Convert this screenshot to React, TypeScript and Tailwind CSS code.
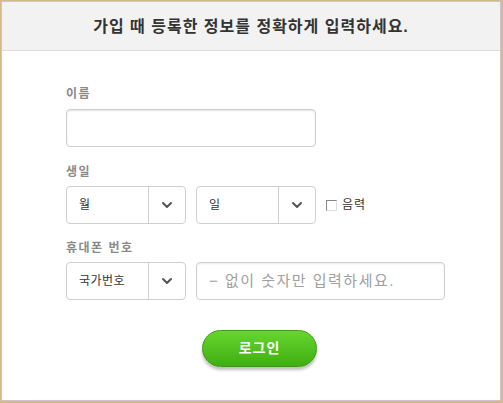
import { ChevronDown } from 'lucide-react';

const font = { fontFamily: '"Liberation Sans", "Noto Sans CJK KR", sans-serif' };

const Select = ({ label }: { label: string }) => (
  <div className="flex h-[38px] w-[120px] items-stretch rounded-[4px] border border-[#cfcfcf] bg-white">
    <div className="flex flex-1 items-center pl-[12px] text-[12px] tracking-[0.5px] text-[#333]">{label}</div>
    <div className="flex w-[37px] items-center justify-center border-l border-[#cfcfcf]">
      <ChevronDown size={16} strokeWidth={3} className="text-[#555]" />
    </div>
  </div>
);

export default function App() {
  return (
    <div className="h-[403px] w-[503px] bg-[#d8b888] pl-px pt-px pr-[2px] pb-[2px]" style={font}>
      <div className="flex h-full flex-col border border-[#c8c8c8] bg-white">
        <div className="flex h-[49px] items-center justify-center border-b border-[#dcdcdc] bg-[#f2f2f2] pt-[2px]">
          <h1 className="text-[16px] font-bold tracking-[1px] text-[#333]">가입 때 등록한 정보를 정확하게 입력하세요.</h1>
        </div>

        <div className="flex flex-col pl-[64px] pt-[34px]">
          <label className="text-[12px] font-bold tracking-[1.5px] text-[#8a8a8a]">이름</label>
          <div className="mt-[6px] h-[38px] w-[250px] rounded-[4px] border border-[#cfcfcf] bg-white shadow-[inset_0_1px_2px_rgba(0,0,0,0.12)]" />

          <label className="mt-[16px] text-[12px] font-bold tracking-[1.5px] text-[#8a8a8a]">생일</label>
          <div className="mt-[5px] flex items-center gap-[10px]">
            <Select label="월" />
            <Select label="일" />
            <div className="flex items-center gap-[5px]">
              <span className="h-[11px] w-[11px] border border-[#888] border-r-[#ddd] border-b-[#ddd] bg-white" />
              <span className="text-[12px] tracking-[1px] text-[#333]">음력</span>
            </div>
          </div>

          <label className="mt-[15px] text-[12px] font-bold tracking-[1.5px] text-[#8a8a8a]">휴대폰 번호</label>
          <div className="mt-[5px] flex items-center gap-[10px]">
            <Select label="국가번호" />
            <div className="flex h-[38px] w-[249px] items-center rounded-[4px] border border-[#cfcfcf] bg-white pl-[12px] text-[15px] tracking-[1.5px] text-[#a0a0a0] shadow-[inset_0_1px_2px_rgba(0,0,0,0.08)]">
              − 없이 숫자만 입력하세요.
            </div>
          </div>

          <div className="mt-[30px] flex pl-[136px]">
            <button className="flex h-[37px] w-[115px] items-center justify-center rounded-full border border-[#3e9a12] bg-gradient-to-b from-[#66d62e] to-[#3fae10] text-[14px] font-bold tracking-[1px] text-white shadow-[0_3px_3px_rgba(0,0,0,0.25)]">
              로그인
            </button>
          </div>
        </div>
      </div>
    </div>
  );
}
